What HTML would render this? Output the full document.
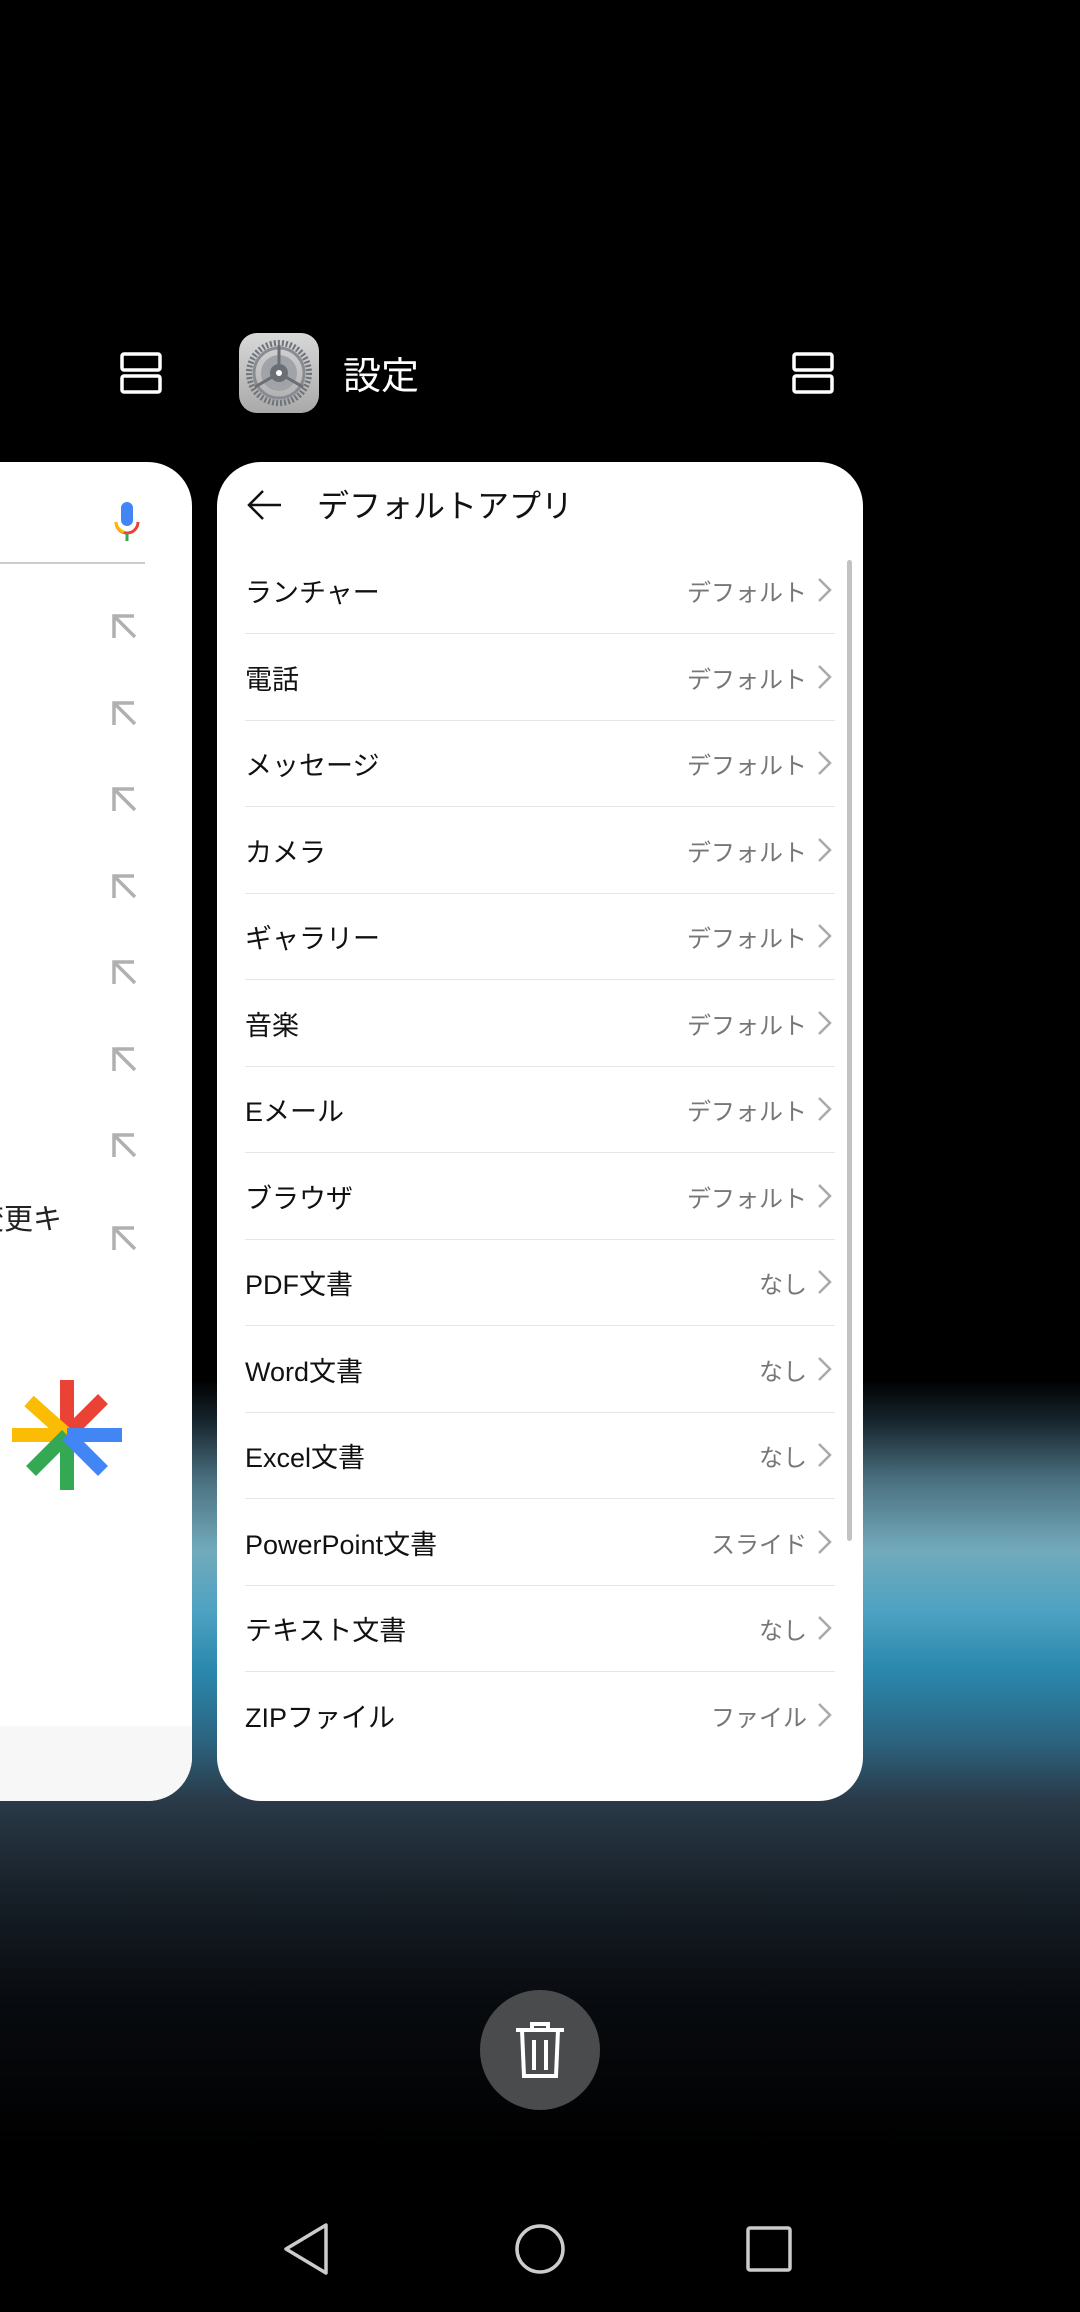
<!DOCTYPE html>
<html><head><meta charset="utf-8"><style>
*{margin:0;padding:0;box-sizing:border-box}
body{width:1080px;height:2312px;overflow:hidden;position:relative;font-family:"Liberation Sans","Noto Sans CJK JP",sans-serif;
background:linear-gradient(to bottom,#000 0,#000 1380px,#16242c 1420px,#4a7080 1480px,#72aabb 1550px,#4ea2c2 1610px,#2a88ad 1670px,#2c6480 1740px,#2a3a48 1800px,#161e26 1900px,#080b0f 2000px,#000 2150px,#000 100%)}
.card{position:absolute;background:#fff;border-radius:44px;overflow:hidden}
.row{position:absolute;left:28px;width:590px;height:86px;border-bottom:1.5px solid #e6e6e6}
.row .l{position:absolute;left:0;top:23px;font-size:27px;color:#111}
.row .v{position:absolute;right:28px;top:25px;font-size:24px;color:#777}
.row svg{position:absolute;right:2px;top:29px}
.arr{position:absolute;left:112px}
</style></head><body>
<svg style="position:absolute;left:120px;top:352px" width="42" height="42" viewBox="0 0 42 42"><rect x="2" y="2" width="38" height="16" rx="2" fill="none" stroke="#fff" stroke-width="3.5"/><rect x="2" y="24" width="38" height="16" rx="2" fill="none" stroke="#fff" stroke-width="3.5"/></svg>
<svg style="position:absolute;left:792px;top:352px" width="42" height="42" viewBox="0 0 42 42"><rect x="2" y="2" width="38" height="16" rx="2" fill="none" stroke="#fff" stroke-width="3.5"/><rect x="2" y="24" width="38" height="16" rx="2" fill="none" stroke="#fff" stroke-width="3.5"/></svg>
<svg style="position:absolute;left:239px;top:333px" width="80" height="80" viewBox="0 0 80 80">
<defs><linearGradient id="g" x1="0" y1="0" x2="0" y2="1"><stop offset="0" stop-color="#d8d8d8"/><stop offset="1" stop-color="#a9a9a9"/></linearGradient></defs>
<rect width="80" height="80" rx="18" fill="url(#g)"/>
<circle cx="40" cy="40" r="30" fill="none" stroke="#6f737a" stroke-width="6" stroke-dasharray="2 2"/>
<circle cx="40" cy="40" r="25" fill="none" stroke="#888c92" stroke-width="3"/>
<circle cx="40" cy="40" r="18" fill="#a0a3a8"/>
<path d="M40 40V12M40 40L16 54M40 40L64 54" stroke="#6a6e75" stroke-width="3"/>
<circle cx="40" cy="40" r="9" fill="#6a6e75"/><circle cx="40" cy="40" r="3" fill="#fff"/></svg>
<div style="position:absolute;left:343px;top:345px;font-size:38px;color:#fff">設定</div>

<div class="card" style="left:-60px;top:462px;width:252px;height:1339px">
<div style="position:absolute;left:60px;top:100px;width:145px;height:2px;background:#ccc"></div>
<svg style="position:absolute;left:173px;top:40px" width="28" height="44" viewBox="0 0 28 44"><rect x="8" y="0" width="12" height="24" rx="6" fill="#4285f4"/><path d="M3 20a11 11 0 0 0 22 0" fill="none" stroke="#ea4335" stroke-width="3"/><path d="M3 20a11 11 0 0 0 8 10" fill="none" stroke="#fbbc05" stroke-width="3"/><rect x="12.5" y="31" width="3" height="8" fill="#34a853"/></svg>
<div style="position:absolute;left:0;top:734px;font-size:29px;color:#222;width:122px;text-align:right">変更キ</div>
<div style="position:absolute;left:0;top:1264px;width:252px;height:75px;background:#f7f7f7"></div>
<svg style="position:absolute;left:72px;top:918px" width="110" height="110" viewBox="-55 -55 110 110" stroke-width="14">
<line x1="0" y1="0" x2="0" y2="-55" stroke="#ea4335"/><line x1="0" y1="0" x2="36" y2="-36" stroke="#ea4335"/>
<line x1="0" y1="0" x2="-38" y2="-34" stroke="#fbbc05"/><line x1="0" y1="0" x2="-55" y2="0" stroke="#fbbc05"/>
<line x1="0" y1="0" x2="-36" y2="36" stroke="#34a853"/><line x1="0" y1="0" x2="0" y2="55" stroke="#34a853"/>
<line x1="0" y1="0" x2="55" y2="0" stroke="#4285f4"/><line x1="0" y1="0" x2="36" y2="36" stroke="#4285f4"/></svg>
</div>
<svg style="position:absolute;width:0;height:0"><defs><g id="ua"><path d="M2 24V2h20M2 2l21 21" fill="none" stroke="#b0b0b0" stroke-width="3.5"/></g></defs></svg>
<svg class="arr" style="top:614px" width="26" height="26"><use href="#ua"/></svg>
<svg class="arr" style="top:701px" width="26" height="26"><use href="#ua"/></svg>
<svg class="arr" style="top:787px" width="26" height="26"><use href="#ua"/></svg>
<svg class="arr" style="top:874px" width="26" height="26"><use href="#ua"/></svg>
<svg class="arr" style="top:960px" width="26" height="26"><use href="#ua"/></svg>
<svg class="arr" style="top:1047px" width="26" height="26"><use href="#ua"/></svg>
<svg class="arr" style="top:1133px" width="26" height="26"><use href="#ua"/></svg>
<svg class="arr" style="top:1226px" width="26" height="26"><use href="#ua"/></svg>

<div class="card" style="left:217px;top:462px;width:646px;height:1339px">
<svg style="position:absolute;left:30px;top:27px" width="36" height="32" viewBox="0 0 36 32"><path d="M34 16H3M16 2L2 16l14 14" fill="none" stroke="#111" stroke-width="2.5"/></svg>
<div style="position:absolute;left:100px;top:19px;font-size:32px;color:#111">デフォルトアプリ</div>
<div style="position:absolute;left:630px;top:98px;width:5px;height:981px;border-radius:3px;background:#c2c2c2"></div>
<svg style="position:absolute;width:0;height:0"><defs><path id="ch" d="M2 2l11 11L2 24" fill="none" stroke="#aaa" stroke-width="2.5"/></defs></svg>
<div class="row" style="top:86px"><span class="l">ランチャー</span><span class="v">デフォルト</span><svg width="16" height="26"><use href="#ch"/></svg></div>
<div class="row" style="top:173px"><span class="l">電話</span><span class="v">デフォルト</span><svg width="16" height="26"><use href="#ch"/></svg></div>
<div class="row" style="top:259px"><span class="l">メッセージ</span><span class="v">デフォルト</span><svg width="16" height="26"><use href="#ch"/></svg></div>
<div class="row" style="top:346px"><span class="l">カメラ</span><span class="v">デフォルト</span><svg width="16" height="26"><use href="#ch"/></svg></div>
<div class="row" style="top:432px"><span class="l">ギャラリー</span><span class="v">デフォルト</span><svg width="16" height="26"><use href="#ch"/></svg></div>
<div class="row" style="top:519px"><span class="l">音楽</span><span class="v">デフォルト</span><svg width="16" height="26"><use href="#ch"/></svg></div>
<div class="row" style="top:605px"><span class="l">Eメール</span><span class="v">デフォルト</span><svg width="16" height="26"><use href="#ch"/></svg></div>
<div class="row" style="top:692px"><span class="l">ブラウザ</span><span class="v">デフォルト</span><svg width="16" height="26"><use href="#ch"/></svg></div>
<div class="row" style="top:778px"><span class="l">PDF文書</span><span class="v">なし</span><svg width="16" height="26"><use href="#ch"/></svg></div>
<div class="row" style="top:865px"><span class="l">Word文書</span><span class="v">なし</span><svg width="16" height="26"><use href="#ch"/></svg></div>
<div class="row" style="top:951px"><span class="l">Excel文書</span><span class="v">なし</span><svg width="16" height="26"><use href="#ch"/></svg></div>
<div class="row" style="top:1038px"><span class="l">PowerPoint文書</span><span class="v">スライド</span><svg width="16" height="26"><use href="#ch"/></svg></div>
<div class="row" style="top:1124px"><span class="l">テキスト文書</span><span class="v">なし</span><svg width="16" height="26"><use href="#ch"/></svg></div>
<div class="row" style="top:1211px;border-bottom:none"><span class="l">ZIPファイル</span><span class="v">ファイル</span><svg width="16" height="26"><use href="#ch"/></svg></div>
</div>

<div style="position:absolute;left:480px;top:1990px;width:120px;height:120px;border-radius:60px;background:#4a4b4d"></div>
<svg style="position:absolute;left:512px;top:2020px" width="56" height="60" viewBox="0 0 56 60"><path d="M4 10h48M20 10V4h16v6M10 10l2 46h32l2-46M22 20v30M34 20v30" fill="none" stroke="#fff" stroke-width="4"/></svg>

<svg style="position:absolute;left:282px;top:2222px" width="52" height="54" viewBox="0 0 52 54"><path d="M44 3L4 27l40 24z" fill="none" stroke="#ccc" stroke-width="3.5" stroke-linejoin="round"/></svg>
<svg style="position:absolute;left:513px;top:2222px" width="54" height="54"><circle cx="27" cy="27" r="23" fill="none" stroke="#ccc" stroke-width="3.5"/></svg>
<svg style="position:absolute;left:746px;top:2226px" width="46" height="46"><rect x="2" y="2" width="42" height="42" rx="2" fill="none" stroke="#ccc" stroke-width="3.5"/></svg>
</body></html>
